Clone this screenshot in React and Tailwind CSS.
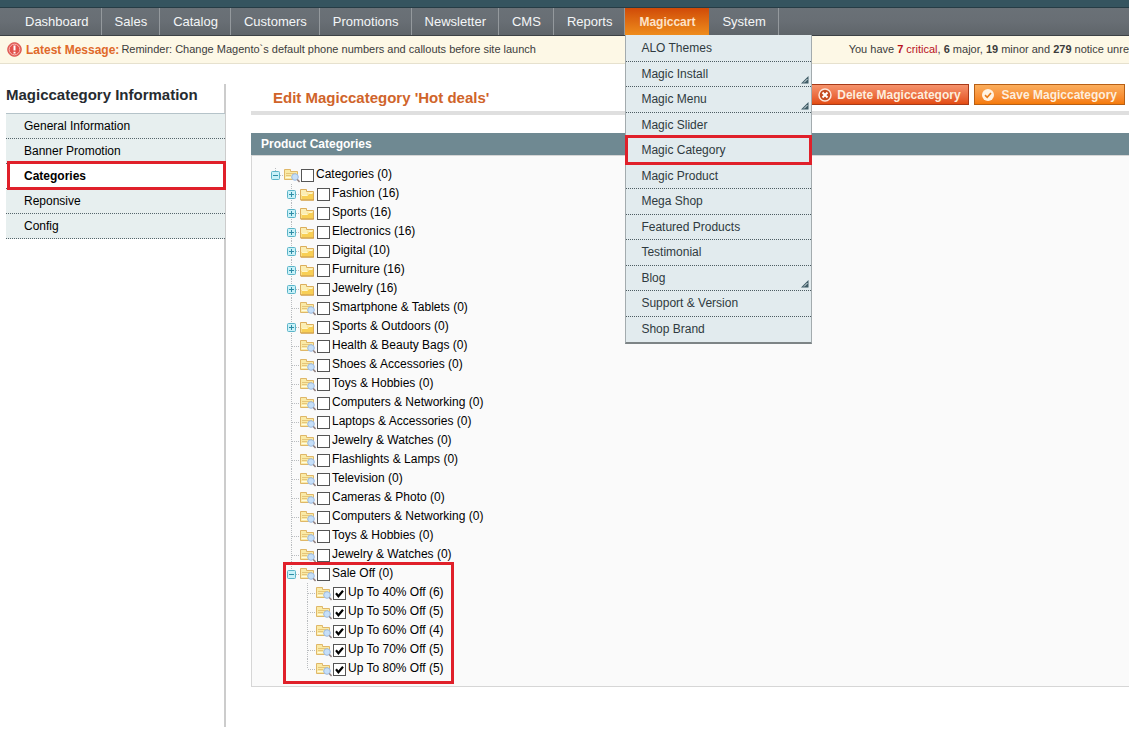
import React from "react";

const FONT = "font-['Liberation_Sans',Arial,sans-serif]";

const NAV = ["Dashboard", "Sales", "Catalog", "Customers", "Promotions", "Newsletter", "CMS", "Reports", "Magiccart", "System"];

const MENU = [
  { label: "ALO Themes" },
  { label: "Magic Install", sub: true },
  { label: "Magic Menu", sub: true },
  { label: "Magic Slider" },
  { label: "Magic Category", marked: true },
  { label: "Magic Product" },
  { label: "Mega Shop" },
  { label: "Featured Products" },
  { label: "Testimonial" },
  { label: "Blog", sub: true },
  { label: "Support & Version" },
  { label: "Shop Brand" },
];

const SIDE = ["General Information", "Banner Promotion", "Categories", "Reponsive", "Config"];

const leaf = (label) => ({ label, kind: "leaf" });
const closed = (label) => ({ label, kind: "closed" });

const TREE = {
  label: "Categories (0)",
  kind: "open",
  root: true,
  children: [
    closed("Fashion (16)"),
    closed("Sports (16)"),
    closed("Electronics (16)"),
    closed("Digital (10)"),
    closed("Furniture (16)"),
    closed("Jewelry (16)"),
    leaf("Smartphone & Tablets (0)"),
    closed("Sports & Outdoors (0)"),
    leaf("Health & Beauty Bags (0)"),
    leaf("Shoes & Accessories (0)"),
    leaf("Toys & Hobbies (0)"),
    leaf("Computers & Networking (0)"),
    leaf("Laptops & Accessories (0)"),
    leaf("Jewelry & Watches (0)"),
    leaf("Flashlights & Lamps (0)"),
    leaf("Television (0)"),
    leaf("Cameras & Photo (0)"),
    leaf("Computers & Networking (0)"),
    leaf("Toys & Hobbies (0)"),
    leaf("Jewelry & Watches (0)"),
    {
      label: "Sale Off (0)",
      kind: "open",
      marked: true,
      children: [
        { ...leaf("Up To 40% Off (6)"), checked: true },
        { ...leaf("Up To 50% Off (5)"), checked: true },
        { ...leaf("Up To 60% Off (4)"), checked: true },
        { ...leaf("Up To 70% Off (5)"), checked: true },
        { ...leaf("Up To 80% Off (5)"), checked: true },
      ],
    },
  ],
};

function Branch({ kind, last, root }) {
  return (
    <svg className="h-[19px] w-4 shrink-0" viewBox="0 0 16 19" aria-hidden="true">
      <path
        d={root ? "M7.5 3V6" : last ? "M7.5 0V10" : "M7.5 0V19"}
        stroke="#b9bcbf"
        strokeDasharray="1 1"
        fill="none"
      />
      <path d="M8 10.5H16" stroke="#b9bcbf" strokeDasharray="1 1" />
      {kind !== "leaf" && (
        <g>
          <rect x="3.5" y="6.5" width="8" height="8" rx="1" fill="#c9f1f8" stroke="#5bb4c8" />
          <path d="M5 10.5H10" stroke="#2f8da6" />
          {kind === "closed" && <path d="M7.5 8V13" stroke="#2f8da6" />}
        </g>
      )}
    </svg>
  );
}

function Folder({ kind }) {
  return (
    <svg className="h-[19px] w-4 shrink-0" viewBox="0 0 16 19" aria-hidden="true">
      {kind === "closed" ? (
        <g>
          <path d="M.5 16V5.500H6.500V7.500H13.500V16z" fill="#fbeeb4" stroke="#dcae5c" />
          <path d="M1.500 15.500V11H7L8 9H13V15.500z" fill="#f8cf55" />
          <path d="M2 11.500H7.500L8.500 9.500H12.500" fill="none" stroke="#fff6c8" />
          <path d="M1 16H14" stroke="#cd9638" />
        </g>
      ) : (
        <g>
          <path d="M.5 14.500V4.500H6.500V6.500H13.500V14.500z" fill="#faeaa6" stroke="#dfb768" />
          <path d="M2 8.500H12M2 10.500H7" stroke="#e6c679" />
          <path d="M1.500 12.500H7" stroke="#fffbe0" />
          <circle cx="11" cy="12" r="3.300" fill="#c6dff8" stroke="#9dbbe0" />
          <path d="M13.300 14.500L15.600 16.900" stroke="#8f7f80" strokeWidth="1.600" />
        </g>
      )}
    </svg>
  );
}

function Node({ node, last }) {
  return (
    <li className="relative">
      <div className="flex h-[19px] items-center">
        <Branch kind={node.kind} last={last} root={node.root} />
        <Folder kind={node.kind} />
        <label className="flex h-full items-center gap-[2px] whitespace-nowrap pl-px leading-[19px]">
          <span className="relative mt-[2px] block size-[13px]">
            <input
              type="checkbox"
              defaultChecked={node.checked}
              className="peer block size-[13px] appearance-none border border-[#555] bg-white"
            />
            <svg
              className="pointer-events-none absolute inset-0 hidden size-[13px] peer-checked:block"
              viewBox="0 0 13 13"
              aria-hidden="true"
            >
              <path d="M3 6.300L5.400 9.200L10 3.800" fill="none" stroke="#000" strokeWidth="2.200" />
            </svg>
          </span>
          <span className="h-[19px]">{node.label}</span>
        </label>
      </div>
      {node.children && (
        <ul className="pl-4">
          {node.children.map((child, i) => (
            <Node key={i} node={child} last={i === node.children.length - 1} />
          ))}
        </ul>
      )}
      {node.marked && (
        <span className="pointer-events-none absolute -bottom-[6px] -left-px -top-[2px] w-[171px] border-3 border-[#e0202a]" />
      )}
    </li>
  );
}

function Dropdown() {
  return (
    <ul className="absolute left-0 top-full z-10 grid h-[309px] w-[187px] auto-rows-fr border border-t-0 border-[#a3abae] border-b-2 border-b-[#7d8486] bg-[#e2ebee] pt-px text-[12px] font-normal text-[#2f3a40]">
      {MENU.map((m) => (
        <li key={m.label} className="relative border-b border-dotted border-[#4d5c62] last:border-b-0">
          <a href="#" className="flex h-full items-center px-[15px]">
            {m.label}
          </a>
          {m.sub && (
            <svg className="absolute bottom-[2px] right-[2px] size-[8px]" viewBox="0 0 8 8" aria-hidden="true">
              <path d="M0 7.500L7.500 0V7.500z" fill="#3f5c66" />
              <path d="M3 6.500L6.500 3" stroke="#e2ebee" />
            </svg>
          )}
          {m.marked && (
            <span className="pointer-events-none absolute -bottom-[2px] -left-px -right-px -top-[3px] border-3 border-[#e0202a]" />
          )}
        </li>
      ))}
    </ul>
  );
}

export default function App() {
  return (
    <div className={`overflow-x-hidden bg-white text-[12px] text-black ${FONT}`}>
      <header>
        <div className="h-[8px] border-b border-[#263c45] bg-[#35545f]" />
        <nav className="h-[28px] border-b border-[#3c4145] bg-linear-to-b from-[#6a7177] via-[#686e74] to-[#5f656a]">
          <ul className="flex h-full pl-[12px] text-[13px] text-[#f4f6f7]">
            {NAV.map((n) =>
              n === "Magiccart" ? (
                <li key={n} className="relative bg-linear-to-b from-[#d04a08] to-[#ee8c1c] text-[12px] font-bold text-[#fde3c8]">
                  <a href="#" className="flex h-full items-center px-[14px]">{n}</a>
                  <Dropdown />
                </li>
              ) : (
                <li key={n} className="border-r border-[#94999d]">
                  <a href="#" className="flex h-full items-center pl-[13px] pr-[12px]">{n}</a>
                </li>
              )
            )}
          </ul>
        </nav>
        <div className="flex h-[28px] items-center justify-between border-b border-[#e6e1ce] bg-[#fdf8e6] text-[11px] text-[#3c3c3c]">
          <p className="flex items-center whitespace-nowrap pl-[7px]">
            <svg className="mr-[4px] size-[15px]" viewBox="0 0 15 15" aria-hidden="true">
              <circle cx="7.500" cy="7.500" r="6.800" fill="#e9635d" stroke="#d9534e" />
              <circle cx="7.500" cy="7.500" r="5.300" fill="#e2514c" stroke="#f5b5b0" />
              <path d="M7.500 3.500V8.500M7.500 9.800V11.500" stroke="#fff" strokeWidth="2" />
            </svg>
            <strong className="mr-[2px] text-[12px] text-[#e0692a]">Latest Message:</strong>
            Reminder: Change Magento`s default phone numbers and callouts before site launch
          </p>
          <p className="shrink-0 whitespace-nowrap">
            You have <span className="text-[#b8101c]"><b>7</b> critical</span>, <b>6</b> major, <b>19</b> minor and <b>279</b> notice unre
          </p>
        </div>
      </header>

      <div className="flex pt-[20px]">
        <aside className="w-[226px] shrink-0 border-r-2 border-[#cccccc] pl-[6px]">
          <h3 className="h-[29px] text-[15px] font-bold leading-[22px] text-[#262b30]">Magiccategory Information</h3>
          <ul className="-mr-px border-t border-[#b5c3c9]">
            {SIDE.map((s) => (
              <li key={s} className={s === "Categories" ? "relative z-10" : "relative"}>
                <a
                  href="#"
                  className={`block h-[25px] border-b border-dotted border-[#55656b] pl-[18px] leading-[24px] ${
                    s === "Categories" ? "bg-white font-bold" : "bg-[#e7efef]"
                  }`}
                >
                  {s}
                </a>
                {s === "Categories" && (
                  <span className="pointer-events-none absolute -bottom-px -right-px -top-[3px] left-px border-3 border-[#e0202a]" />
                )}
              </li>
            ))}
          </ul>
        </aside>

        <main className="min-w-0 flex-1 pb-[40px] pl-[25px]">
          <div className="flex h-[31px] items-start justify-between border-b-4 border-[#dfdfdf] pl-[22px] pr-[4px]">
            <h1 className="whitespace-nowrap text-[15px] font-bold leading-[27px] text-[#d0642a]">
              Edit Magiccategory 'Hot deals'
            </h1>
            <div className="flex gap-[5px] text-[12px] font-bold text-[#fdeedd]">
              <button
                type="button"
                className="flex h-[21px] items-center gap-[5px] whitespace-nowrap border border-[#a83a18] bg-linear-to-b from-[#f5936c] to-[#e34c0f] px-[7px]"
              >
                <svg className="size-[14px]" viewBox="0 0 14 14" aria-hidden="true">
                  <circle cx="7" cy="7" r="6" fill="#c54a20" stroke="#fde6da" strokeWidth="1.500" />
                  <path d="M4.500 4.500L9.500 9.500M9.500 4.500L4.500 9.500" stroke="#fff" strokeWidth="2" />
                </svg>
                Delete Magiccategory
              </button>
              <button
                type="button"
                className="flex h-[21px] items-center gap-[8px] whitespace-nowrap border border-[#b85f14] bg-linear-to-b from-[#fbae5c] to-[#f57a05] px-[7px]"
              >
                <svg className="size-[12px]" viewBox="0 0 12 12" aria-hidden="true">
                  <circle cx="6" cy="6" r="6" fill="#fff3e2" />
                  <path d="M3 6.200L5.200 8.300L9 4" fill="none" stroke="#e97d18" strokeWidth="1.600" />
                </svg>
                Save Magiccategory
              </button>
            </div>
          </div>

          <section className="mt-[18px]">
            <h2 className="h-[22px] bg-[#6f8992] pl-[10px] text-[12px] font-bold leading-[22px] text-white">
              Product Categories
            </h2>
            <div className="border border-r-0 border-[#d6d6d6] bg-[#fafafa] pb-[8px] pl-[16px] pt-[9px]">
              <ul>
                <Node node={TREE} last />
              </ul>
            </div>
          </section>
        </main>
      </div>
    </div>
  );
}
